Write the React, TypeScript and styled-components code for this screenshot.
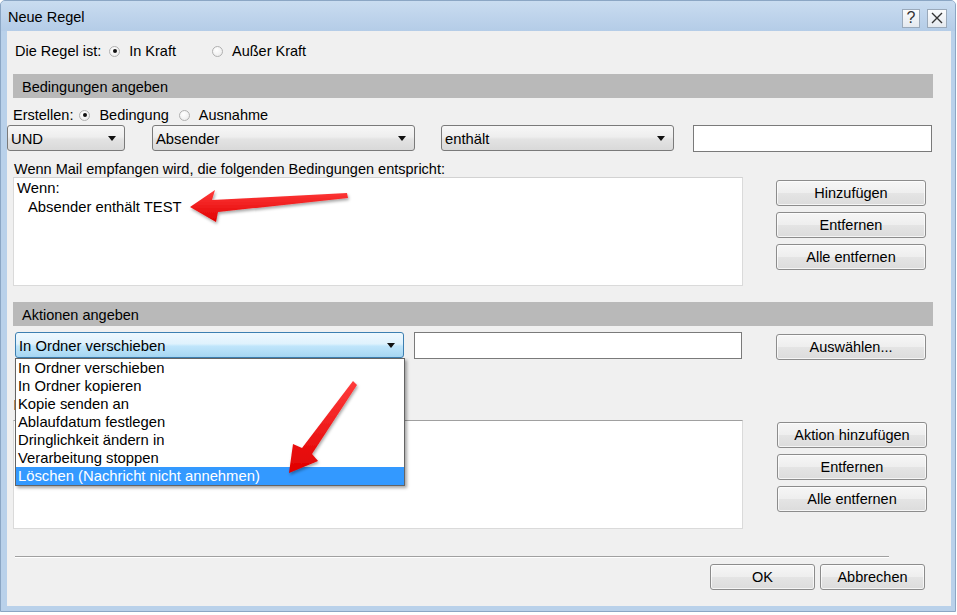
import React from "react";
import styled, { createGlobalStyle } from "styled-components";

const GlobalStyle = createGlobalStyle`
  html, body { margin: 0; padding: 0; background: #ffffff; }
  body {
    font-family: "Liberation Sans", Arial, sans-serif;
    font-size: 14.5px;
    color: #000;
  }
  * { box-sizing: border-box; }
`;

const Window = styled.div`
  position: relative;
  width: 956px;
  height: 612px;
  display: flex;
  flex-direction: column;
  border: 1px solid #8ba6c4;
  border-radius: 5px 5px 0 0;
  background: #b9d1ea;
`;

const TitleBar = styled.div`
  height: 30px;
  flex: none;
  display: flex;
  align-items: center;
  justify-content: space-between;
  padding: 0 8px 0 7px;
  background: linear-gradient(#c9dcf0, #b4cce7);
  border-radius: 4px 4px 0 0;
`;

const Title = styled.span`
  font-size: 14.5px;
  color: #000;
  margin-top: 2px;
`;

const TitleButtons = styled.div`
  display: flex;
  gap: 7px;
  margin-top: 4px;
`;

const TitleBtn = styled.div<{ $w: number }>`
  width: ${(p) => p.$w}px;
  height: 19px;
  display: flex;
  align-items: center;
  justify-content: center;
  border: 1px solid #9aa9ba;
  background: linear-gradient(#fbfcfd, #e4e9ef);
  color: #333;
  font-size: 16px;
  line-height: 1;
`;

const Frame = styled.div`
  flex: 1;
  display: flex;
  padding: 0 4px 5px 6px;
`;

const Content = styled.div`
  flex: 1;
  display: flex;
  flex-direction: column;
  background: #f0f0f0;
`;

const Row = styled.div<{ $top: number; $left: number; $h?: number }>`
  display: flex;
  align-items: center;
  height: ${(p) => p.$h ?? 20}px;
  margin: ${(p) => p.$top}px 0 0 ${(p) => p.$left}px;
  white-space: nowrap;
`;

const Options = styled.div<{ $gap: number; $lead: number }>`
  display: flex;
  align-items: center;
  gap: ${(p) => p.$gap}px;
  margin-left: ${(p) => p.$lead}px;
`;

const RadioLabel = styled.label`
  display: flex;
  align-items: center;
  gap: 9px;
`;

const RadioCircle = styled.span<{ $on?: boolean }>`
  width: 11px;
  height: 11px;
  border-radius: 50%;
  border: 1px solid #b0b0b0;
  background: radial-gradient(circle at 40% 35%, #ffffff, #e8e8e8);
  display: flex;
  align-items: center;
  justify-content: center;
  &::after {
    content: "";
    width: 4px;
    height: 4px;
    border-radius: 50%;
    background: ${(p) => (p.$on ? "#111" : "transparent")};
  }
`;

const SectionBar = styled.div<{ $top: number }>`
  width: 920px;
  height: 24px;
  margin: ${(p) => p.$top}px 0 0 6px;
  padding: 1px 0 0 9px;
  display: flex;
  align-items: center;
  background: #b9b9b9;
`;

const FieldRow = styled.div<{ $top: number; $left: number }>`
  display: flex;
  align-items: flex-start;
  margin: ${(p) => p.$top}px 0 0 ${(p) => p.$left}px;
`;

const Combo = styled.div<{ $w: number; $gap?: number; $focused?: boolean }>`
  width: ${(p) => p.$w}px;
  height: 26px;
  margin-right: ${(p) => p.$gap ?? 0}px;
  display: flex;
  align-items: center;
  justify-content: space-between;
  padding: 1px 8px 0 3px;
  border: 1px solid ${(p) => (p.$focused ? "#3c7fb1" : "#7a7a7a")};
  border-radius: 3px;
  background: ${(p) =>
    p.$focused
      ? "linear-gradient(#eef8fe 0%, #dff2fd 45%, #bfe5fb 55%, #a6d6f2 100%)"
      : "linear-gradient(#f7f7f7 0%, #eeeeee 45%, #e3e3e3 55%, #d9d9d9 100%)"};
  font-size: 14.8px;
`;

const ComboArrow = styled.span`
  width: 0;
  height: 0;
  border-left: 4px solid transparent;
  border-right: 4px solid transparent;
  border-top: 5px solid #111;
`;

const TextBox = styled.div<{ $w: number; $gap?: number }>`
  width: ${(p) => p.$w}px;
  height: 27px;
  margin-right: ${(p) => p.$gap ?? 0}px;
  background: #ffffff;
  border: 1px solid #7a7a7a;
`;

const Caption = styled.div`
  height: 16px;
  margin: 9px 0 0 7px;
  display: flex;
  align-items: center;
  white-space: nowrap;
`;

const ListArea = styled.div<{ $top: number }>`
  display: flex;
  align-items: flex-start;
  margin: ${(p) => p.$top}px 0 0 6px;
`;

const ListBox = styled.div<{ $dark?: boolean; $gap: number }>`
  width: 730px;
  height: 109px;
  margin-right: ${(p) => p.$gap}px;
  background: #ffffff;
  border: 1px solid #dadada;
  border-top-color: ${(p) => (p.$dark ? "#a0a0a0" : "#d2d2d2")};
  padding: 1px 0 0 3px;
  line-height: 19px;
  font-size: 14.8px;
`;

const ListLine = styled.div<{ $indent?: boolean }>`
  padding-left: ${(p) => (p.$indent ? 11 : 0)}px;
  white-space: nowrap;
`;

const ButtonColumn = styled.div<{ $top: number }>`
  display: flex;
  flex-direction: column;
  gap: 6px;
  margin-top: ${(p) => p.$top}px;
`;

const Button = styled.button<{ $w: number; $top?: number; $gap?: number }>`
  width: ${(p) => p.$w}px;
  height: 26px;
  margin-top: ${(p) => p.$top ?? 0}px;
  margin-right: ${(p) => p.$gap ?? 0}px;
  padding: 0;
  border: 1px solid #8c8c8c;
  border-radius: 3px;
  background: linear-gradient(#f6f6f6 0%, #eeeeee 50%, #e4e4e4 51%, #dcdcdc 100%);
  box-shadow: inset 0 0 0 1px rgba(255, 255, 255, 0.7);
  font-family: "Liberation Sans", Arial, sans-serif;
  font-size: 14.5px;
  color: #000;
`;

const ComboWrap = styled.div<{ $gap: number }>`
  position: relative;
  margin-right: ${(p) => p.$gap}px;
`;

const DropList = styled.div`
  position: absolute;
  top: 26px;
  left: 0;
  width: 390px;
  z-index: 5;
  background: #ffffff;
  border: 1px solid #646464;
  box-shadow: 2px 2px 3px rgba(0, 0, 0, 0.35);
`;

const DropItem = styled.div<{ $sel?: boolean }>`
  height: 18px;
  line-height: 19px;
  padding-left: 2px;
  font-size: 14.8px;
  white-space: nowrap;
  background: ${(p) => (p.$sel ? "#3399ff" : "transparent")};
  color: ${(p) => (p.$sel ? "#ffffff" : "#000000")};
`;

const LabelStub = styled.div`
  width: 2px;
  height: 10px;
  margin: 40px 0 0 7px;
  background: #c08a50;
`;

const Separator = styled.div`
  width: 874px;
  height: 2px;
  margin: 27px 0 0 8px;
  border-top: 1px solid #a0a0a0;
  border-bottom: 1px solid #ffffff;
`;

const Footer = styled.div`
  display: flex;
  justify-content: flex-end;
  margin-top: 6px;
  padding-right: 26px;
`;

const Overlay = styled.svg`
  position: absolute;
  top: -1px;
  left: -1px;
  width: 957px;
  height: 615px;
  pointer-events: none;
  z-index: 10;
`;

const Radio: React.FC<{ on?: boolean; label: string }> = ({ on, label }) => (
  <RadioLabel>
    <RadioCircle $on={on} />
    <span>{label}</span>
  </RadioLabel>
);

const actions = [
  "In Ordner verschieben",
  "In Ordner kopieren",
  "Kopie senden an",
  "Ablaufdatum festlegen",
  "Dringlichkeit ändern in",
  "Verarbeitung stoppen",
  "Löschen (Nachricht nicht annehmen)",
];

export default function App() {
  return (
    <>
      <GlobalStyle />
      <Window>
        <TitleBar>
          <Title>Neue Regel</Title>
          <TitleButtons>
            <TitleBtn $w={18}>?</TitleBtn>
            <TitleBtn $w={20}>
              <svg width="12" height="12" viewBox="0 0 12 12">
                <path d="M1 1 L11 11 M11 1 L1 11" stroke="#333" strokeWidth="1.4" />
              </svg>
            </TitleBtn>
          </TitleButtons>
        </TitleBar>
        <Frame>
          <Content>
            <Row $top={10} $left={8}>
              <span>Die Regel ist:</span>
              <Options $gap={36} $lead={8}>
                <Radio on label="In Kraft" />
                <Radio label="Außer Kraft" />
              </Options>
            </Row>

            <SectionBar $top={13}>Bedingungen angeben</SectionBar>

            <Row $top={8} $left={6} $h={18}>
              <span>Erstellen:</span>
              <Options $gap={10} $lead={6}>
                <Radio on label="Bedingung" />
                <Radio label="Ausnahme" />
              </Options>
            </Row>

            <FieldRow $top={1} $left={0}>
              <Combo $w={118} $gap={27}>
                <span>UND</span>
                <ComboArrow />
              </Combo>
              <Combo $w={263} $gap={26}>
                <span>Absender</span>
                <ComboArrow />
              </Combo>
              <Combo $w={233} $gap={19}>
                <span>enthält</span>
                <ComboArrow />
              </Combo>
              <TextBox $w={239} />
            </FieldRow>

            <Caption>Wenn Mail empfangen wird, die folgenden Bedingungen entspricht:</Caption>

            <ListArea $top={0}>
              <ListBox $gap={33}>
                <ListLine>Wenn:</ListLine>
                <ListLine $indent>Absender enthält TEST</ListLine>
              </ListBox>
              <ButtonColumn $top={3}>
                <Button $w={150}>Hinzufügen</Button>
                <Button $w={150}>Entfernen</Button>
                <Button $w={150}>Alle entfernen</Button>
              </ButtonColumn>
            </ListArea>

            <SectionBar $top={16}>Aktionen angeben</SectionBar>

            <FieldRow $top={6} $left={8}>
              <ComboWrap $gap={10}>
                <Combo $w={389} $focused>
                  <span>In Ordner verschieben</span>
                  <ComboArrow />
                </Combo>
                <DropList>
                  {actions.map((a, i) => (
                    <DropItem key={a} $sel={i === actions.length - 1}>
                      {a}
                    </DropItem>
                  ))}
                </DropList>
              </ComboWrap>
              <TextBox $w={328} $gap={34} />
              <Button $w={150} $top={2}>
                Auswählen...
              </Button>
            </FieldRow>

            <LabelStub />

            <ListArea $top={10}>
              <ListBox $dark $gap={34} />
              <ButtonColumn $top={2}>
                <Button $w={150}>Aktion hinzufügen</Button>
                <Button $w={150}>Entfernen</Button>
                <Button $w={150}>Alle entfernen</Button>
              </ButtonColumn>
            </ListArea>

            <Separator />

            <Footer>
              <Button $w={105} $gap={5}>
                OK
              </Button>
              <Button $w={105}>Abbrechen</Button>
            </Footer>
          </Content>
        </Frame>

        <Overlay viewBox="0 0 957 615">
          <defs>
            <linearGradient id="redGrad" x1="0" y1="0" x2="0" y2="1">
              <stop offset="0" stopColor="#ff3b3b" />
              <stop offset="1" stopColor="#e00000" />
            </linearGradient>
            <filter id="arrowShadow" x="-20%" y="-20%" width="140%" height="160%">
              <feDropShadow dx="1" dy="2" stdDeviation="1.6" floodColor="#000" floodOpacity="0.35" />
            </filter>
          </defs>
          <polygon
            points="190,207 215,190 212,200 347,193 348,198 218,212 216,222"
            fill="url(#redGrad)"
            filter="url(#arrowShadow)"
          />
          <polygon
            points="353,381 357,385 312,454 318,461 289,473 293,444 302,448"
            fill="url(#redGrad)"
            filter="url(#arrowShadow)"
          />
        </Overlay>
      </Window>
    </>
  );
}
